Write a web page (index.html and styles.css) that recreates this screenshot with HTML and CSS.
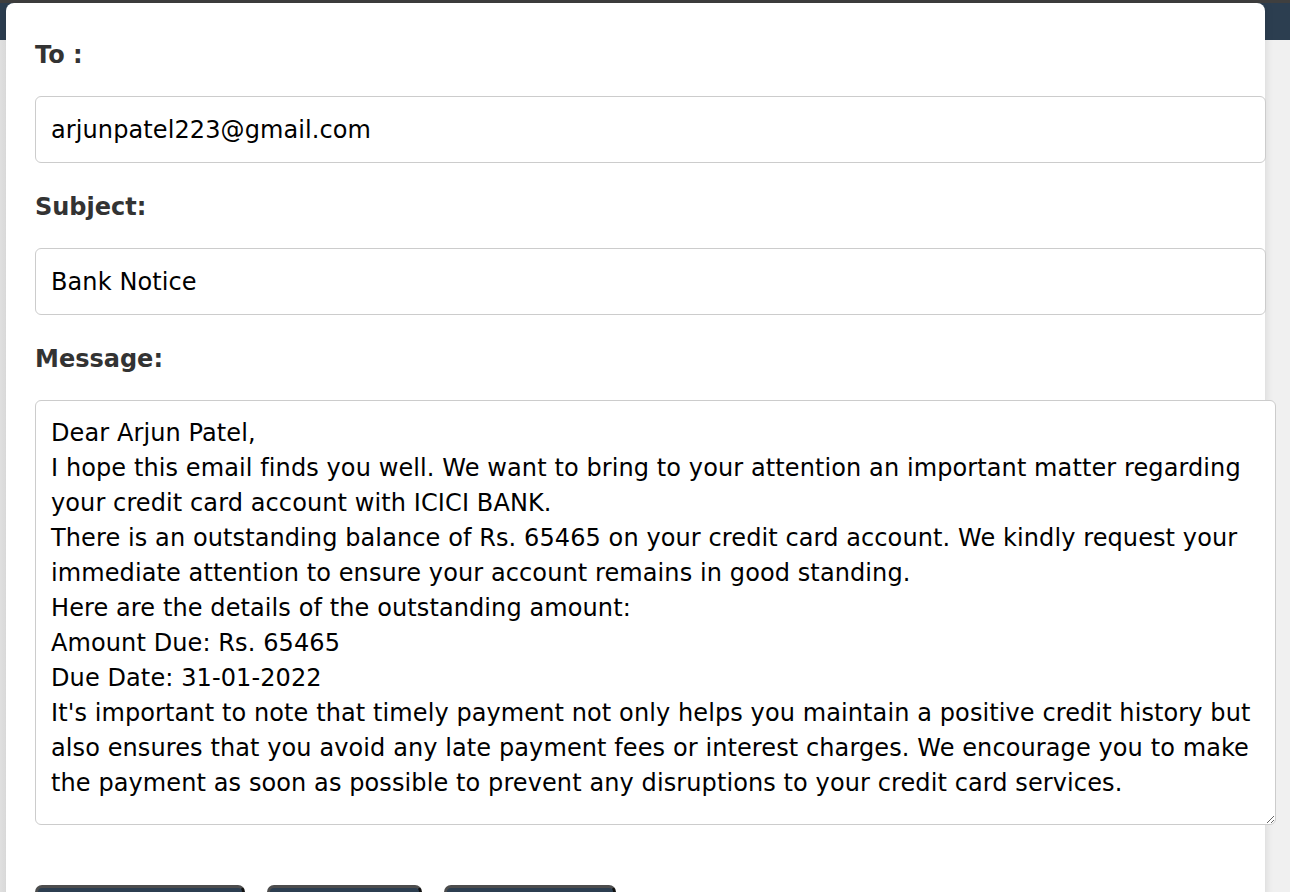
FILE: index.html
```html
<!DOCTYPE html>
<html lang="en">
<head>
<meta charset="utf-8">
<title>Compose Email</title>
<link rel="stylesheet" href="styles.css">
</head>
<body>
<div class="topline"></div>
<header class="navbar"></header>
<div class="backdrop"></div>

<div class="modal">
  <form class="mail-form">
    <label class="field-label" for="to">To :</label>
    <input class="field-input" id="to" type="text" value="arjunpatel223@gmail.com">

    <label class="field-label" for="subject">Subject:</label>
    <input class="field-input" id="subject" type="text" value="Bank Notice">

    <label class="field-label" for="message">Message:</label>
    <textarea class="field-textarea" id="message">Dear Arjun Patel,
I hope this email finds you well. We want to bring to your attention an important matter regarding your credit card account with ICICI BANK.
There is an outstanding balance of Rs. 65465 on your credit card account. We kindly request your immediate attention to ensure your account remains in good standing.
Here are the details of the outstanding amount:
Amount Due: Rs. 65465
Due Date: 31-01-2022
It's important to note that timely payment not only helps you maintain a positive credit history but also ensures that you avoid any late payment fees or interest charges. We encourage you to make the payment as soon as possible to prevent any disruptions to your credit card services.</textarea>

    <div class="actions">
      <button type="button" class="btn btn-wide">Send Email</button>
      <button type="button" class="btn btn-mid">Cancel</button>
      <button type="button" class="btn btn-last">Preview</button>
    </div>
  </form>
</div>
</body>
</html>
```

FILE: styles.css
```css
* {
  box-sizing: border-box;
}

html, body {
  margin: 0;
  padding: 0;
  height: 100%;
  overflow: hidden;
}

body {
  background: #f0f0f0;
  font-family: "DejaVu Sans", "Noto Sans", sans-serif;
}

.topline {
  height: 3px;
  background: #3f3f3f;
}

.navbar {
  height: 37px;
  background: #2c3e50;
}

.backdrop {
  height: 100%;
  background: linear-gradient(to right, #e2e2e2 0, #e6e6e6 6px, #f0f0f0 6px);
}

.modal {
  position: absolute;
  top: 3px;
  left: 6px;
  width: 1259px;
  height: 1000px;
  background: #ffffff;
  border-radius: 8px 8px 0 0;
  box-shadow: 0 0 10px rgba(0, 0, 0, 0.12);
  padding: 34px 29px 0 29px;
}

.mail-form {
  display: flex;
  flex-direction: column;
  align-items: flex-start;
}

.field-label {
  display: block;
  font-size: 24px;
  line-height: 36px;
  font-weight: bold;
  color: #333333;
  margin-bottom: 23px;
}

.field-input,
.field-textarea {
  font-family: "DejaVu Sans", "Noto Sans", sans-serif;
  font-size: 24px;
  letter-spacing: 0.1px;
  color: #000000;
  background: #ffffff;
  border: 1px solid #cccccc;
  border-radius: 6px;
  padding: 15px;
  outline: none;
}

.field-input {
  width: 1231px;
  height: 67px;
  line-height: 34px;
  margin-bottom: 26px;
}

.field-textarea {
  width: 1241px;
  height: 425px;
  line-height: 35px;
  padding: 15px;
  resize: both;
  overflow: hidden;
}

.actions {
  display: flex;
  gap: 22px;
  margin-top: 60px;
}

.btn {
  height: 48px;
  background: #2c3e50;
  color: #ffffff;
  font-family: "DejaVu Sans", sans-serif;
  font-size: 18px;
  border-top: 3px solid #4d4d4d;
  border-left: 3px solid #4d4d4d;
  border-right: 3px solid #111111;
  border-bottom: 3px solid #111111;
  border-radius: 7px;
  padding: 0 20px;
}

.btn-wide {
  width: 210px;
}

.btn-mid {
  width: 155px;
}

.btn-last {
  width: 172px;
}
```
